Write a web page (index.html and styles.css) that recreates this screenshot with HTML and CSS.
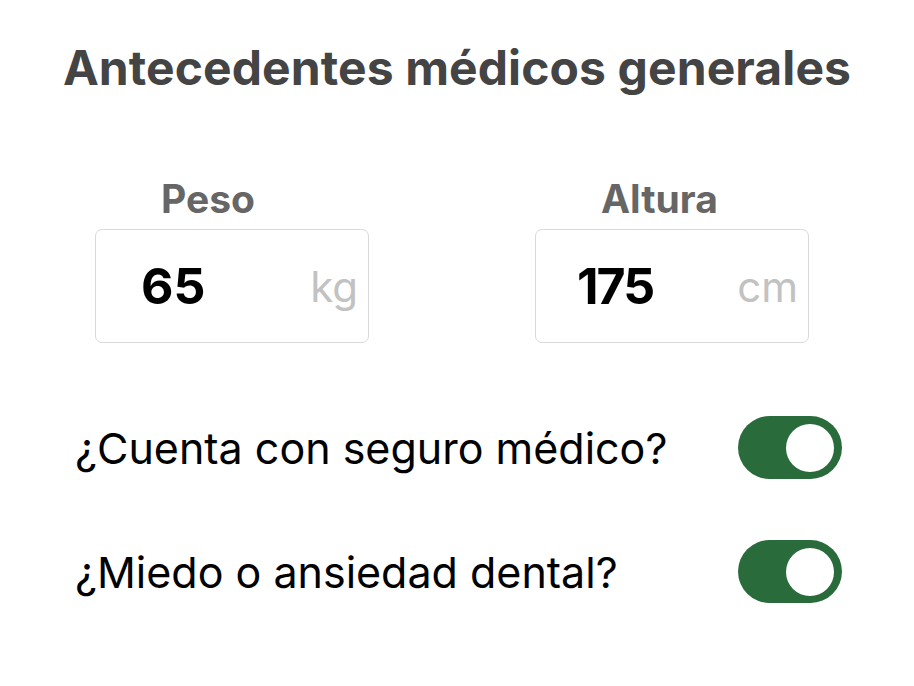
FILE: index.html
```html
<!DOCTYPE html>
<html lang="es">
<head>
<meta charset="utf-8">
<link rel="stylesheet" href="styles.css">
</head>
<body>
<main class="card">
  <h1 class="title">Antecedentes médicos generales</h1>
  <div class="measures">
    <div class="field field-peso">
      <div class="label">Peso</div>
      <div class="box">
        <span class="value">65</span>
        <span class="unit">kg</span>
      </div>
    </div>
    <div class="field field-altura">
      <div class="label">Altura</div>
      <div class="box">
        <span class="value">175</span>
        <span class="unit">cm</span>
      </div>
    </div>
  </div>
  <div class="rows">
    <div class="row">
      <span class="question">¿Cuenta con seguro médico?</span>
      <span class="toggle"><span class="knob"></span></span>
    </div>
    <div class="row">
      <span class="question">¿Miedo o ansiedad dental?</span>
      <span class="toggle"><span class="knob"></span></span>
    </div>
  </div>
</main>
</body>
</html>
```

FILE: styles.css
```css
html, body {
  margin: 0;
  padding: 0;
  background: #ffffff;
}
body {
  font-family: "Inter", "Noto Sans", sans-serif;
  width: 914px;
  height: 686px;
  overflow: hidden;
}
.card {
  display: flex;
  flex-direction: column;
  padding: 38px 0 0 0;
}
.title {
  margin: 0;
  text-align: center;
  font-size: 48px;
  font-weight: 700;
  color: #444444;
  line-height: 60px;
  letter-spacing: 0.1px;
}
.measures {
  display: flex;
  gap: 166px;
  padding-left: 95px;
  margin-top: 81px;
}
.field {
  display: flex;
  flex-direction: column;
  width: 274px;
}
.label {
  font-size: 39px;
  font-weight: 700;
  color: #666666;
  line-height: 40px;
  height: 40px;
}
.field-peso .label { padding-left: 66px; }
.field-altura .label { padding-left: 66px; }
.box {
  box-sizing: border-box;
  height: 114px;
  border: 1.5px solid #d9d9d9;
  border-radius: 7px;
  display: flex;
  align-items: center;
  justify-content: space-between;
  padding: 0 10px 0 45px;
  margin-top: 10px;
}
.value {
  font-size: 50px;
  font-weight: 700;
  color: #000000;
}
.field-altura .value {
  padding-left: 0;
  letter-spacing: -2px;
  margin-left: -4px;
}
.unit {
  font-size: 42px;
  font-weight: 400;
  color: #c2c2c2;
}
.rows {
  display: flex;
  flex-direction: column;
  gap: 61px;
  margin-top: 73px;
  padding: 0 72px 0 75px;
}
.row {
  display: flex;
  align-items: center;
  justify-content: space-between;
  height: 63px;
}
.question {
  font-size: 43px;
  color: #000000;
  font-weight: 400;
}
.toggle {
  box-sizing: border-box;
  width: 104px;
  height: 63px;
  border-radius: 32px;
  background: #2a6b3b;
  display: flex;
  align-items: center;
  justify-content: flex-end;
  padding-right: 8px;
}
.knob {
  width: 48px;
  height: 48px;
  border-radius: 50%;
  background: #ffffff;
}
```
